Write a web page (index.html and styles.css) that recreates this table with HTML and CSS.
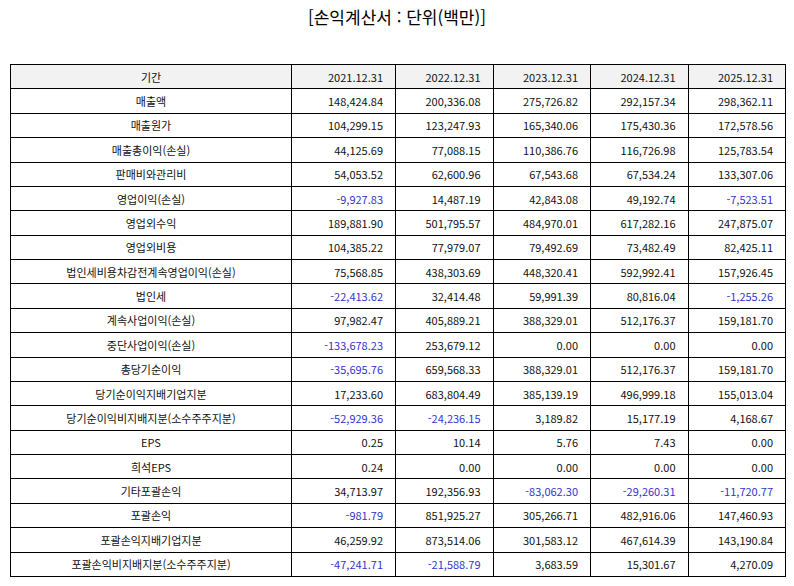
FILE: index.html
```html
<!DOCTYPE html>
<html lang="ko">
<head>
<meta charset="utf-8">
<title>손익계산서</title>
<link rel="stylesheet" href="styles.css">
</head>
<body>
<div class="page">
  <h1 class="title">[손익계산서 : 단위(백만)]</h1>
  <table class="fin">
    <colgroup>
      <col class="c-label"><col class="c-first"><col class="c-y"><col class="c-y"><col class="c-y"><col class="c-y">
    </colgroup>
    <thead>
      <tr><th>기간</th><th>2021.12.31</th><th>2022.12.31</th><th>2023.12.31</th><th>2024.12.31</th><th>2025.12.31</th></tr>
    </thead>
    <tbody>
      <tr><td>매출액</td><td>148,424.84</td><td>200,336.08</td><td>275,726.82</td><td>292,157.34</td><td>298,362.11</td></tr>
      <tr><td>매출원가</td><td>104,299.15</td><td>123,247.93</td><td>165,340.06</td><td>175,430.36</td><td>172,578.56</td></tr>
      <tr><td>매출총이익(손실)</td><td>44,125.69</td><td>77,088.15</td><td>110,386.76</td><td>116,726.98</td><td>125,783.54</td></tr>
      <tr><td>판매비와관리비</td><td>54,053.52</td><td>62,600.96</td><td>67,543.68</td><td>67,534.24</td><td>133,307.06</td></tr>
      <tr><td>영업이익(손실)</td><td class="neg">-9,927.83</td><td>14,487.19</td><td>42,843.08</td><td>49,192.74</td><td class="neg">-7,523.51</td></tr>
      <tr><td>영업외수익</td><td>189,881.90</td><td>501,795.57</td><td>484,970.01</td><td>617,282.16</td><td>247,875.07</td></tr>
      <tr><td>영업외비용</td><td>104,385.22</td><td>77,979.07</td><td>79,492.69</td><td>73,482.49</td><td>82,425.11</td></tr>
      <tr><td>법인세비용차감전계속영업이익(손실)</td><td>75,568.85</td><td>438,303.69</td><td>448,320.41</td><td>592,992.41</td><td>157,926.45</td></tr>
      <tr><td>법인세</td><td class="neg">-22,413.62</td><td>32,414.48</td><td>59,991.39</td><td>80,816.04</td><td class="neg">-1,255.26</td></tr>
      <tr><td>계속사업이익(손실)</td><td>97,982.47</td><td>405,889.21</td><td>388,329.01</td><td>512,176.37</td><td>159,181.70</td></tr>
      <tr><td>중단사업이익(손실)</td><td class="neg">-133,678.23</td><td>253,679.12</td><td>0.00</td><td>0.00</td><td>0.00</td></tr>
      <tr><td>총당기순이익</td><td class="neg">-35,695.76</td><td>659,568.33</td><td>388,329.01</td><td>512,176.37</td><td>159,181.70</td></tr>
      <tr><td>당기순이익지배기업지분</td><td>17,233.60</td><td>683,804.49</td><td>385,139.19</td><td>496,999.18</td><td>155,013.04</td></tr>
      <tr><td>당기순이익비지배지분(소수주주지분)</td><td class="neg">-52,929.36</td><td class="neg">-24,236.15</td><td>3,189.82</td><td>15,177.19</td><td>4,168.67</td></tr>
      <tr><td>EPS</td><td>0.25</td><td>10.14</td><td>5.76</td><td>7.43</td><td>0.00</td></tr>
      <tr><td>희석EPS</td><td>0.24</td><td>0.00</td><td>0.00</td><td>0.00</td><td>0.00</td></tr>
      <tr><td>기타포괄손익</td><td>34,713.97</td><td>192,356.93</td><td class="neg">-83,062.30</td><td class="neg">-29,260.31</td><td class="neg">-11,720.77</td></tr>
      <tr><td>포괄손익</td><td class="neg">-981.79</td><td>851,925.27</td><td>305,266.71</td><td>482,916.06</td><td>147,460.93</td></tr>
      <tr><td>포괄손익지배기업지분</td><td>46,259.92</td><td>873,514.06</td><td>301,583.12</td><td>467,614.39</td><td>143,190.84</td></tr>
      <tr><td>포괄손익비지배지분(소수주주지분)</td><td class="neg">-47,241.71</td><td class="neg">-21,588.79</td><td>3,683.59</td><td>15,301.67</td><td>4,270.09</td></tr>
    </tbody>
  </table>
</div>
</body>
</html>
```

FILE: styles.css
```css
html, body {
  margin: 0;
  padding: 0;
  background: #ffffff;
}

.page {
  width: 794px;
  padding: 0 10px;
  box-sizing: border-box;
  font-family: "Noto Sans CJK KR", "Noto Sans", sans-serif;
  color: #111111;
}

.title {
  margin: 0;
  height: 64px;
  padding-top: 5px;
  box-sizing: border-box;
  text-align: center;
  font-size: 17px;
  font-weight: normal;
  line-height: 24px;
  color: #000000;
}

.fin {
  border-collapse: collapse;
  table-layout: fixed;
  width: 775px;
  font-size: 11px;
}

.c-label { width: 281px; }
.c-first { width: 104px; }
.c-y { width: 97.5px; }

.fin th,
.fin td {
  border: 1px solid #000000;
  height: 24.38px;
  padding: 0 12px 0 4px;
  box-sizing: border-box;
  line-height: 14px;
  white-space: nowrap;
  text-align: right;
  font-weight: normal;
  vertical-align: middle;
}

.fin th {
  background: #f2f2f2;
}

.fin th:first-child,
.fin td:first-child {
  text-align: center;
  padding: 0 4px;
}

.fin .neg {
  color: #3333cc;
}
```
